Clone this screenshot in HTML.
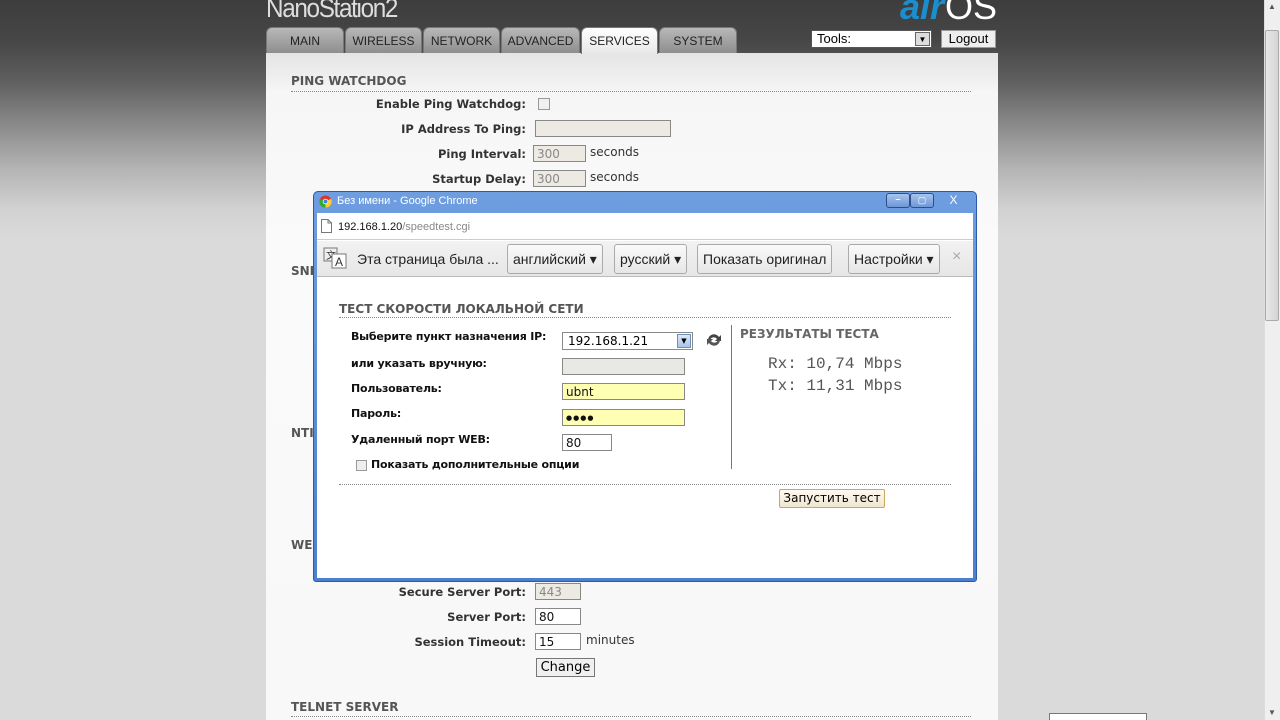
<!DOCTYPE html>
<html><head><meta charset="utf-8">
<style>
*{margin:0;padding:0;box-sizing:border-box}
html{width:1280px;height:720px;overflow:hidden}
body{width:1280px;height:720px;overflow:hidden;position:relative;font-family:"Liberation Sans","DejaVu Sans",sans-serif;background:linear-gradient(#3d3d3d 0px,#464646 40px,#5e5e5e 80px,#858585 120px,#b5b5b5 170px,#d2d2d2 210px,#dadada 240px,#dadada 720px)}
.a{position:absolute}
.logo{left:266px;top:-7px;color:#ddd;font:27px "Liberation Sans",sans-serif;letter-spacing:-1.5px;transform:scaleX(.9);transform-origin:left}
.air{left:900px;top:-14px;font:italic bold 36px "Liberation Sans",sans-serif;color:#1a8fd0}
.os{left:945px;top:-14px;font:36px "Liberation Sans",sans-serif;color:#fff}
.tab{top:27px;height:26px;background:linear-gradient(#b8b8b8,#8e8e8e);border-radius:6px 6px 0 0;color:#222;font:12px "Liberation Sans",sans-serif;text-align:center;line-height:26px;border:1px solid #777;border-bottom:none;overflow:hidden}
.tab.on{background:linear-gradient(#fff,#e8e8e8);height:27px}
.panel{left:266px;top:53px;width:732px;height:667px;background:linear-gradient(#e4e4e4,#f6f6f6 40px,#fafafa 200px,#f8f8f8)}
.h{font:bold 12px "DejaVu Sans",sans-serif;color:#555}
.hr{border-top:1px dotted #888;height:0}
.lb{font:bold 11.5px "DejaVu Sans",sans-serif;color:#333;text-align:right}
.in{border:1px solid #888;background:#eceae2;font:12px "DejaVu Sans",sans-serif;color:#888;padding-left:3px;line-height:16px}
.tx{font:12px "DejaVu Sans",sans-serif;color:#333}
.dlg{left:313px;top:191px;width:664px;height:391px;background:linear-gradient(#6e9ee0,#4c7fd0);border:1px solid #2d5aa8;border-radius:5px 5px 3px 3px}
.btn{border:1px solid #aaa;border-radius:3px;background:linear-gradient(#fafafa,#e6e6e6);font:14px "Liberation Sans",sans-serif;color:#222;line-height:28px;padding:0 5px}
.dl{font:bold 11px "DejaVu Sans",sans-serif;color:#111;letter-spacing:-0.2px}
</style></head><body>
<div class="a logo">NanoStation2</div>
<div class="a air">air</div><div class="a os">OS</div>
<div class="a tab" style="left:266px;width:78px">MAIN</div>
<div class="a tab" style="left:345px;width:77px">WIRELESS</div>
<div class="a tab" style="left:423px;width:77px">NETWORK</div>
<div class="a tab" style="left:501px;width:79px">ADVANCED</div>
<div class="a tab" style="left:659px;width:78px">SYSTEM</div>
<div class="a panel"></div>
<div class="a tab on" style="left:581px;width:77px">SERVICES</div>
<div class="a" style="left:811px;top:30px;width:121px;height:18px;background:#fff;border:1px solid #555;font:13px 'Liberation Sans',sans-serif;padding-left:5px;line-height:16px">Tools:<span class="a" style="right:1px;top:1px;width:15px;height:14px;background:#ddd;border:1px solid #666;font-size:8px;text-align:center;line-height:13px">▼</span></div>
<div class="a" style="left:941px;top:30px;width:55px;height:18px;background:#eee;border:1px solid #999;font:13px 'Liberation Sans',sans-serif;text-align:center;line-height:16px">Logout</div>

<div class="a h" style="left:291px;top:74px">PING WATCHDOG</div>
<div class="a hr" style="left:291px;top:91px;width:680px"></div>
<div class="a lb" style="left:300px;top:97px;width:226px">Enable Ping Watchdog:</div>
<div class="a" style="left:538px;top:98px;width:12px;height:12px;border:1px solid #999;background:#f0f0f0"></div>
<div class="a lb" style="left:300px;top:122px;width:226px">IP Address To Ping:</div>
<div class="a in" style="left:535px;top:120px;width:136px;height:17px"></div>
<div class="a lb" style="left:300px;top:147px;width:226px">Ping Interval:</div>
<div class="a in" style="left:533px;top:145px;width:53px;height:17px">300</div>
<div class="a tx" style="left:590px;top:145px">seconds</div>
<div class="a lb" style="left:300px;top:172px;width:226px">Startup Delay:</div>
<div class="a in" style="left:533px;top:170px;width:53px;height:17px">300</div>
<div class="a tx" style="left:590px;top:170px">seconds</div>
<div class="a h" style="left:291px;top:264px">SNI</div>
<div class="a h" style="left:291px;top:426px">NTI</div>
<div class="a h" style="left:291px;top:538px">WE</div>

<div class="a lb" style="left:300px;top:585px;width:226px">Secure Server Port:</div>
<div class="a in" style="left:535px;top:583px;width:46px;height:17px">443</div>
<div class="a lb" style="left:300px;top:610px;width:226px">Server Port:</div>
<div class="a in" style="left:535px;top:608px;width:46px;height:17px;background:#fff;color:#111">80</div>
<div class="a lb" style="left:300px;top:635px;width:226px">Session Timeout:</div>
<div class="a in" style="left:535px;top:633px;width:46px;height:17px;background:#fff;color:#111">15</div>
<div class="a tx" style="left:586px;top:633px">minutes</div>
<div class="a" style="left:536px;top:658px;width:59px;height:19px;border:1px solid #777;background:#f0f0f0;font:13px 'DejaVu Sans',sans-serif;text-align:center;line-height:17px">Change</div>
<div class="a h" style="left:291px;top:700px">TELNET SERVER</div>
<div class="a hr" style="left:291px;top:716px;width:680px"></div>
<div class="a" style="left:1049px;top:713px;width:98px;height:7px;border:1px solid #777;border-bottom:none;background:#fff"></div>

<div class="a" style="left:1264px;top:0;width:16px;height:720px;background:#efefef;border-left:1px solid #ddd"></div>
<div class="a" style="left:1265px;top:30px;width:14px;height:291px;background:linear-gradient(90deg,#e8e8e8,#d4d4d4);border:1px solid #aaa;border-radius:2px"></div>
<div class="a" style="left:1268px;top:2px;font-size:8px;color:#555">▲</div>
<div class="a" style="left:1268px;top:708px;font-size:8px;color:#555">▼</div>

<div class="a dlg">
 <svg class="a" style="left:5px;top:3px" width="13" height="13" viewBox="0 0 14 14"><circle cx="7" cy="7" r="6.5" fill="#d33"/><path d="M7 7 L13 4 A6.5 6.5 0 0 1 7 13.5Z" fill="#fc3"/><path d="M7 7 L7 13.5 A6.5 6.5 0 0 1 1 4Z" fill="#3a3"/><circle cx="7" cy="7" r="3" fill="#fff"/><circle cx="7" cy="7" r="2.2" fill="#38d"/></svg>
 <div class="a" style="left:23px;top:3px;font:11px 'Liberation Sans',sans-serif;color:#fff">Без имени - Google Chrome</div>
 <div class="a" style="left:572px;top:1px;width:24px;height:15px;border:1px solid #2d4f8a;border-radius:3px;background:linear-gradient(#a8c4ec,#6d97d6);color:#fff;font:bold 9px sans-serif;text-align:center">–</div>
 <div class="a" style="left:596px;top:1px;width:24px;height:15px;border:1px solid #2d4f8a;border-radius:3px;background:linear-gradient(#a8c4ec,#6d97d6);color:#fff;font:9px sans-serif;text-align:center;line-height:13px">▢</div>
 <div class="a" style="left:623px;top:1px;width:33px;height:15px;color:#fff;font:12px sans-serif;text-align:center;line-height:14px">X</div>
 <div class="a" style="left:3px;top:21px;width:656px;height:365px;background:#fff">
  <div class="a" style="left:0;top:0;width:656px;height:27px;background:#fff;border-bottom:1px solid #ccc"></div>
  <svg class="a" style="left:4px;top:6px" width="11" height="14"><path d="M.5 .5H7L10.5 4V13.5H.5Z M7 .5V4H10.5" fill="#fff" stroke="#777"/></svg>
  <div class="a" style="left:21px;top:8px;font:11px 'Liberation Sans',sans-serif;color:#111">192.168.1.20<span style="color:#888">/speedtest.cgi</span></div>
  <div class="a" style="left:0;top:28px;width:656px;height:36px;background:linear-gradient(#f2f2f2,#e6e6e6);border-bottom:1px solid #bbb"></div>
  <svg class="a" style="left:6px;top:34px" width="26" height="22"><rect x="1" y="1" width="13" height="13" fill="#eee" stroke="#777"/><text x="3" y="12" font-size="10" font-family="Liberation Sans" fill="#333">文</text><rect x="9" y="7" width="14" height="14" fill="#fff" stroke="#777"/><text x="12" y="19" font-size="12" font-family="Liberation Sans" fill="#333">A</text></svg>
  <div class="a" style="left:40px;top:36px;font:14px 'Liberation Sans',sans-serif;color:#222;line-height:20px">Эта страница была ...</div>
  <div class="a btn" style="left:190px;top:31px">английский ▾</div>
  <div class="a btn" style="left:297px;top:31px">русский ▾</div>
  <div class="a btn" style="left:380px;top:31px">Показать оригинал</div>
  <div class="a btn" style="left:531px;top:31px">Настройки ▾</div>
  <div class="a" style="left:635px;top:35px;font:16px sans-serif;color:#aaa">×</div>

  <div class="a h" style="left:22px;top:89px;color:#555">ТЕСТ СКОРОСТИ ЛОКАЛЬНОЙ СЕТИ</div>
  <div class="a hr" style="left:22px;top:104px;width:612px"></div>
  <div class="a dl" style="left:34px;top:117px">Выберите пункт назначения IP:</div>
  <div class="a" style="left:245px;top:119px;width:131px;height:18px;border:1px solid #888;background:#fff;font:12px 'DejaVu Sans',sans-serif;padding-left:5px;line-height:16px">192.168.1.21<span class="a" style="right:1px;top:1px;width:14px;height:14px;background:linear-gradient(#dbe8f8,#a9c4e8);border:1px solid #6e8fb8;font-size:7px;text-align:center;line-height:12px">▼</span></div>
  <svg class="a" style="left:388px;top:118px" width="18" height="18" viewBox="0 0 18 18"><path d="M3 9 A6 6 0 0 1 14 6 L16 4 L16 10 L10 10 L12 8 A4 4 0 0 0 5 9Z" fill="#444"/><path d="M15 9 A6 6 0 0 1 4 12 L2 14 L2 8 L8 8 L6 10 A4 4 0 0 0 13 9Z" fill="#555"/></svg>
  <div class="a" style="left:414px;top:112px;width:1px;height:144px;background:#777"></div>
  <div class="a h" style="left:423px;top:114px;color:#666">РЕЗУЛЬТАТЫ ТЕСТА</div>
  <div class="a" style="left:451px;top:140px;font:16px 'Liberation Mono',monospace;color:#555;line-height:22px">Rx: 10,74 Mbps<br>Tx: 11,31 Mbps</div>
  <div class="a dl" style="left:34px;top:144px">или указать вручную:</div>
  <div class="a in" style="left:245px;top:145px;width:123px;height:17px;background:#e8e8e4"></div>
  <div class="a dl" style="left:34px;top:169px">Пользователь:</div>
  <div class="a in" style="left:245px;top:170px;width:123px;height:17px;background:#ffffb3;color:#111">ubnt</div>
  <div class="a dl" style="left:34px;top:194px">Пароль:</div>
  <div class="a in" style="left:245px;top:196px;width:123px;height:17px;background:#ffffb3;color:#111;font-size:7px;letter-spacing:1px">●●●●</div>
  <div class="a dl" style="left:34px;top:220px">Удаленный порт WEB:</div>
  <div class="a in" style="left:245px;top:221px;width:50px;height:17px;background:#fff;color:#111">80</div>
  <div class="a" style="left:39px;top:247px;width:11px;height:11px;border:1px solid #999;background:#eee"></div>
  <div class="a dl" style="left:54px;top:245px">Показать дополнительные опции</div>
  <div class="a hr" style="left:22px;top:271px;width:612px"></div>
  <div class="a" style="left:462px;top:276px;width:106px;height:19px;border:1px solid #c8a860;border-radius:2px;background:linear-gradient(#fffaf0,#efe6d0);font:12px 'DejaVu Sans',sans-serif;text-align:center;line-height:17px">Запустить тест</div>
 </div>
</div>
</body></html>
